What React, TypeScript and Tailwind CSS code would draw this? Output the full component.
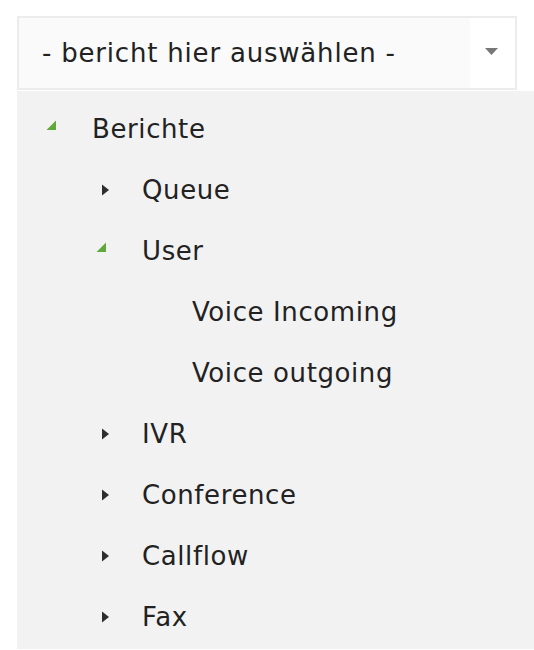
const tree = [
  { label: "Berichte", level: 0, state: "open" },
  { label: "Queue", level: 1, state: "closed" },
  { label: "User", level: 1, state: "open" },
  { label: "Voice Incoming", level: 2, state: "leaf" },
  { label: "Voice outgoing", level: 2, state: "leaf" },
  { label: "IVR", level: 1, state: "closed" },
  { label: "Conference", level: 1, state: "closed" },
  { label: "Callflow", level: 1, state: "closed" },
  { label: "Fax", level: 1, state: "closed" },
];

const indent = ["pl-[28px]", "pl-[78px]", "pl-[128px]"];

function Arrow({ state }: { state: string }) {
  if (state === "open") {
    return (
      <svg width="11" height="11" viewBox="0 0 11 11" className="ml-px mt-[-7px]">
        <polygon points="10,0.5 10,10 0.5,10" fill="#5fa83a" />
      </svg>
    );
  }
  if (state === "closed") {
    return (
      <svg width="9" height="12" viewBox="0 0 9 12" className="ml-[6px]">
        <polygon points="1,0.5 8,6 1,11.5" fill="#2e2e2e" />
      </svg>
    );
  }
  return null;
}

export default function App() {
  return (
    <div className="min-h-[650px] bg-white pt-4 pl-[17px] font-['DejaVu_Sans',Verdana,sans-serif] text-[#222]">
      <div className="flex h-[74px] w-[500px] border-2 border-[#ececec] bg-[#fafafa]">
        <div className="flex flex-1 items-center pl-[23px] text-[26px] leading-none tracking-[0.8px]">
          - bericht hier auswählen -
        </div>
        <div className="flex w-[45px] items-center justify-center bg-white">
          <svg width="13" height="8" viewBox="0 0 13 8" className="mr-[2px] mt-[-2px]">
            <polygon points="0,0 13,0 6.5,7" fill="#777" />
          </svg>
        </div>
      </div>
      <div className="mt-px bg-[#f2f2f2] pt-[7px] pb-[2px]">
        {tree.map((n) => (
          <div key={n.label} className={`flex h-[61px] items-center ${indent[n.level]}`}>
            <div className="flex w-[47px] shrink-0 items-center">
              <Arrow state={n.state} />
            </div>
            <span className="text-[26px] leading-none tracking-[0.6px]">{n.label}</span>
          </div>
        ))}
      </div>
    </div>
  );
}
